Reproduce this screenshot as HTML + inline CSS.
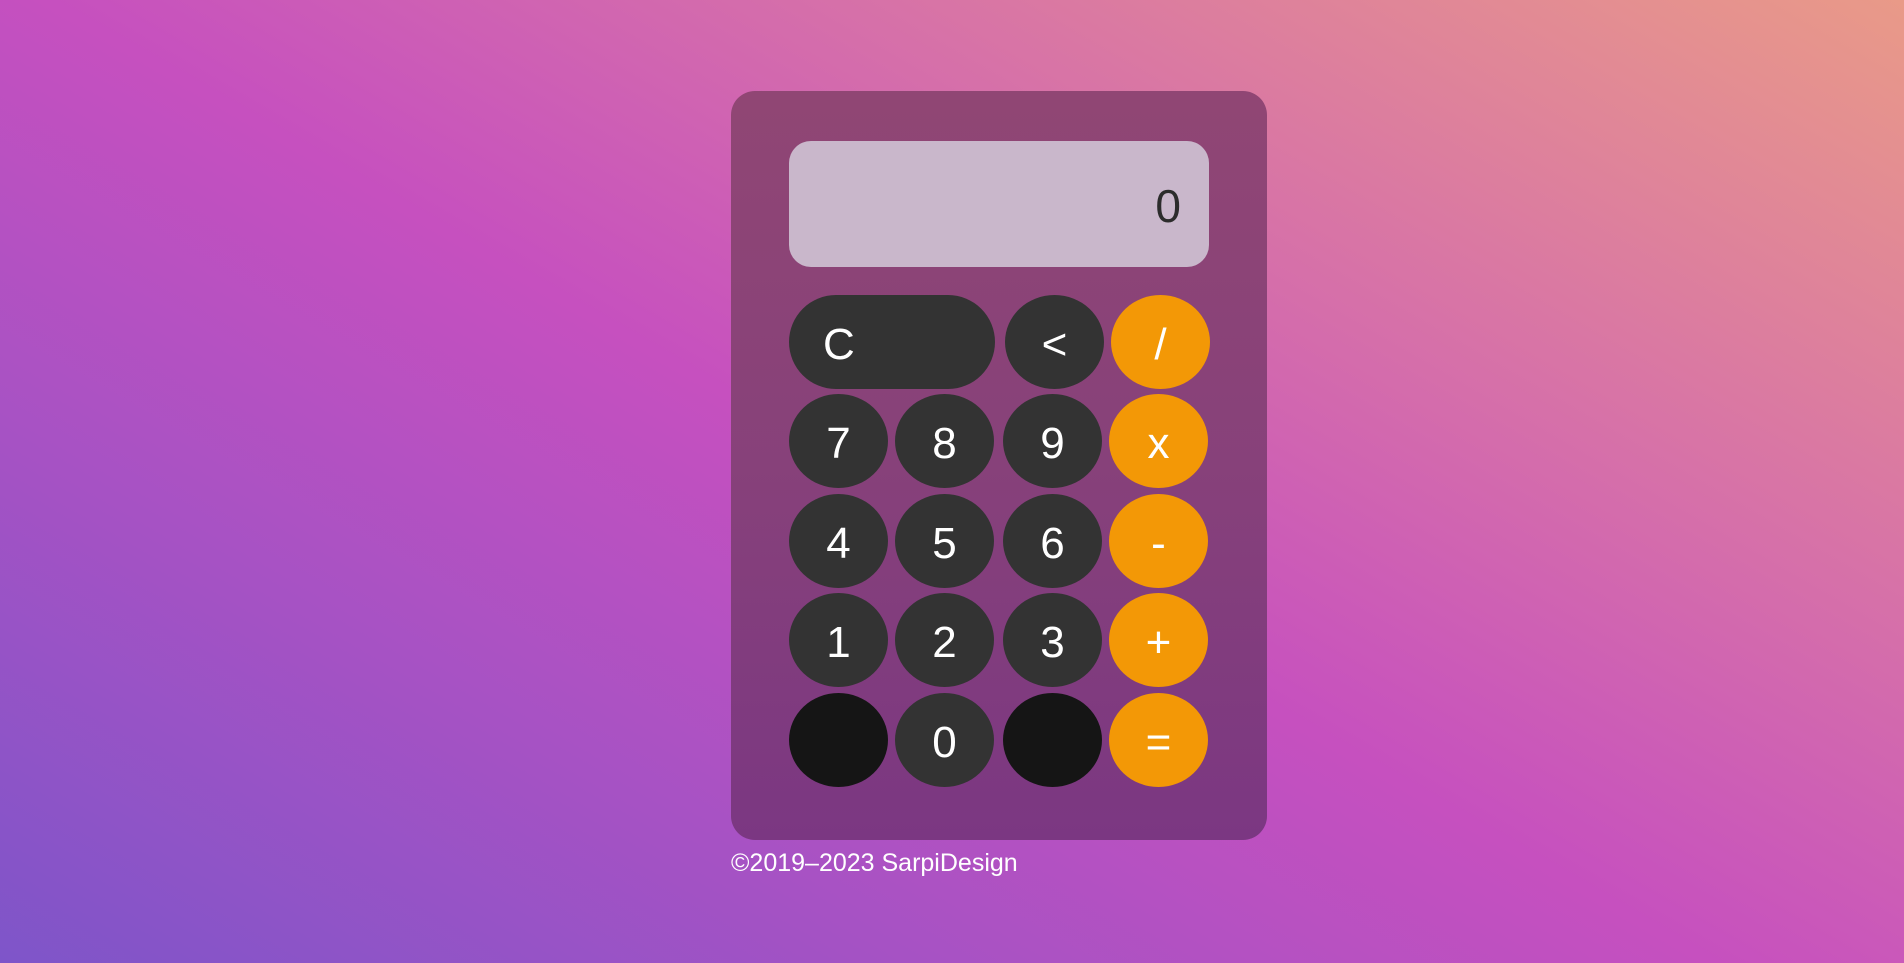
<!DOCTYPE html>
<html><head><meta charset="utf-8"><style>
html,body{margin:0;padding:0;width:1904px;height:963px;overflow:hidden;}
body{background:linear-gradient(30deg,#7e55c9 0%,#a552c4 25%,#c650bf 48%,#d670a9 70%,#e99a88 100%);font-family:"Liberation Sans","DejaVu Sans",sans-serif;position:relative;}
.card{position:absolute;left:731px;top:91px;width:536px;height:749px;border-radius:24px;background:linear-gradient(to bottom,#904674 0%,#87417a 50%,#7b3782 100%);}
.disp{position:absolute;left:789px;top:141px;width:420px;height:126px;border-radius:22px;background:#c9b7cb;color:#2c2c2c;font-size:46px;text-align:right;box-sizing:border-box;padding-right:28px;line-height:130px;}
.b{position:absolute;width:99px;height:94px;border-radius:50%;background:#333;color:#fff;font-size:44px;display:flex;align-items:center;justify-content:center;box-sizing:border-box;padding-top:6px;}
.o{background:#f39806;}
.k{background:#151515;}
.foot{position:absolute;left:731px;top:849px;color:#fff;font-size:25px;}
</style></head><body>
<div class="card"></div>
<div class="disp">0</div>
<div class="b" style="left:789px;top:295px;width:206px;border-radius:47px;justify-content:flex-start;padding-left:34px;">C</div>
<div class="b" style="left:1005px;top:295px;">&lt;</div>
<div class="b o" style="left:1111px;top:295px;">/</div>
<div class="b" style="left:789px;top:394px;">7</div>
<div class="b" style="left:895px;top:394px;">8</div>
<div class="b" style="left:1003px;top:394px;">9</div>
<div class="b o" style="left:1109px;top:394px;">x</div>
<div class="b" style="left:789px;top:494px;">4</div>
<div class="b" style="left:895px;top:494px;">5</div>
<div class="b" style="left:1003px;top:494px;">6</div>
<div class="b o" style="left:1109px;top:494px;">-</div>
<div class="b" style="left:789px;top:593px;">1</div>
<div class="b" style="left:895px;top:593px;">2</div>
<div class="b" style="left:1003px;top:593px;">3</div>
<div class="b o" style="left:1109px;top:593px;">+</div>
<div class="b k" style="left:789px;top:693px;"></div>
<div class="b" style="left:895px;top:693px;">0</div>
<div class="b k" style="left:1003px;top:693px;"></div>
<div class="b o" style="left:1109px;top:693px;">=</div>
<div class="foot">©2019–2023 SarpiDesign</div>
</body></html>
